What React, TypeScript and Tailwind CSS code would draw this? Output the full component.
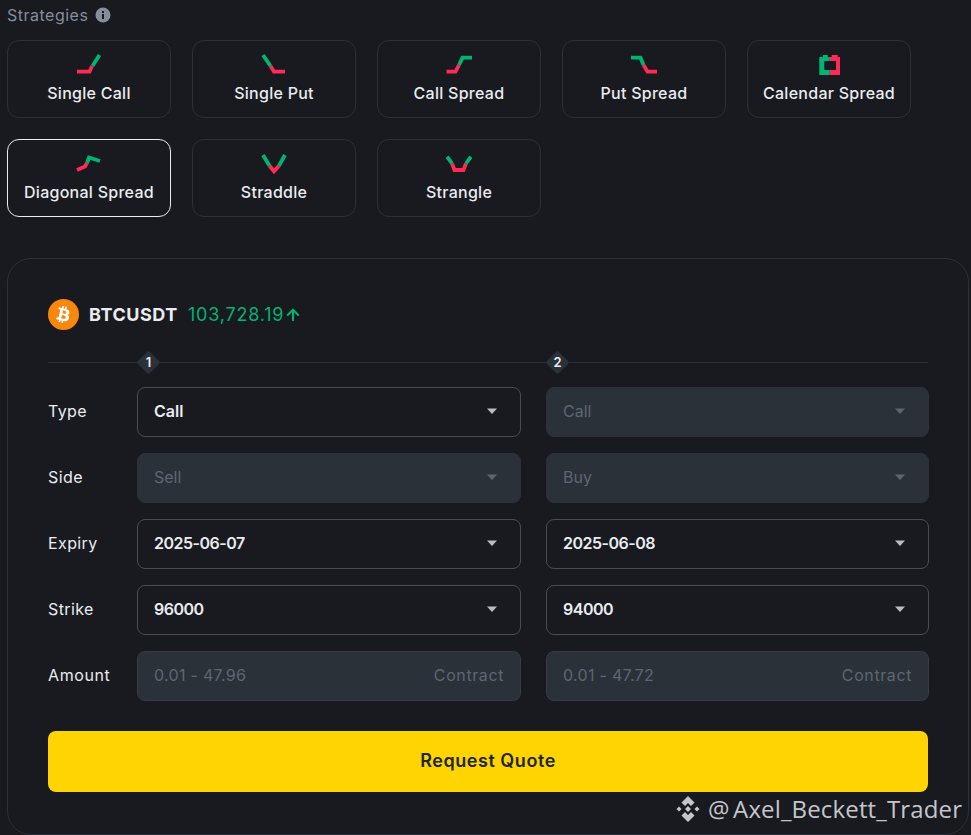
import { ArrowUp } from "lucide-react";
import { FaBtc } from "react-icons/fa";

const RED = "#FF2A55";
const GREEN = "#00B574";

const strategies = [
  { name: "Single Call", red: "M1 19.7H13.5L16 14", green: "M16.5 14L23.5 3" },
  { name: "Single Put", red: "M9.5 14L13 19.7H24", green: "M2 3L9.5 14" },
  { name: "Call Spread", red: "M0.5 19.7H9.5L13 13", green: "M13 13L16.5 5.7H26" },
  { name: "Put Spread", red: "M12.5 13L16.5 19.7H26", green: "M0 5.7H9.5L12.5 13" },
  {
    name: "Calendar Spread",
    red: "M13.7 5H15.7V3H21.7V5H24V23H13.7V18H20V9H13.7Z",
    green: "M3.3 5H7V3H11.7V5H13.7V9H8.3V18H13.7V23H3.3Z",
    solid: true,
  },
  { name: "Diagonal Spread", red: "M1 19L9 15.5L11 12", green: "M11 12L13 6.5L24 10" },
  { name: "Straddle", red: "M8.5 14.7L13 20.3L18 14.7", green: "M2 4L8.5 14.7M18 14.7L24 4" },
  { name: "Strangle", red: "M6 12.3L8.5 19H17.5L20 12.3", green: "M1 5.7L6 12.3M20 12.3L25 5.7" },
];

const rows = [
  { label: "Type", a: "Call", b: "Call", aOff: false, bOff: true },
  { label: "Side", a: "Sell", b: "Buy", aOff: true, bOff: true },
  { label: "Expiry", a: "2025-06-07", b: "2025-06-08", aOff: false, bOff: false },
  { label: "Strike", a: "96000", b: "94000", aOff: false, bOff: false },
];

const Select = ({ value, off }: { value: string; off: boolean }) => (
  <div
    className={`h-[50px] rounded-lg border flex items-center justify-between pl-4 pr-[22px] pb-[2px] text-[16px] ${
      off
        ? "bg-[#2B3139] border-[#2B3139] text-[#5E6673]"
        : "border-[#474D57] text-[#EAECEF] font-semibold"
    }`}
  >
    <span className={/^\d/.test(value) ? "tracking-[-0.5px]" : ""}>{value}</span>
    <svg width="12" height="8" viewBox="0 0 12 8">
      <path d="M1 1.5H11L6 7Z" fill={off ? "#5E6673" : "#B7BDC6"} />
    </svg>
  </div>
);

const AmountInput = ({ range }: { range: string }) => (
  <div className="h-[50px] rounded-lg border border-[#363C45] bg-[#2B3139] flex items-center justify-between px-4 pb-[2px] text-[16px] text-[#5E6673]">
    <span className="tracking-[0.3px]">{range}</span>
    <span className="tracking-[0.6px]">Contract</span>
  </div>
);

const Step = ({ n, className }: { n: number; className: string }) => (
  <div className={`absolute top-[-11px] w-[23px] h-[23px] flex items-center justify-center ${className}`}>
    <div className="absolute w-[17px] h-[17px] rotate-45 rounded-[2px] bg-[#2B3139]" />
    <span className="relative text-[13px] font-semibold text-[#EAECEF]">{n}</span>
  </div>
);

export default function App() {
  return (
    <div
      className="relative w-[971px] h-[835px] overflow-hidden bg-[#181A20] pl-[7px] pr-[2px]"
      style={{ fontFamily: "Inter, 'Liberation Sans', sans-serif" }}
    >
      <div className="flex items-center gap-[7px] h-[30px] text-[16px] tracking-[0.5px] text-[#848E9C]">
        Strategies
        <svg width="16" height="16" viewBox="0 0 16 16">
          <circle cx="8" cy="8" r="7.5" fill="#848E9C" />
          <path d="M7 7H9V12H7ZM7 4H9V6H7Z" fill="#181A20" />
        </svg>
      </div>

      <div className="mt-[10px] grid grid-cols-[repeat(5,164px)] gap-[21px]">
        {strategies.map((s) => (
          <div
            key={s.name}
            className={`h-[78px] rounded-xl border flex flex-col items-center pt-[11px] ${
              s.name === "Diagonal Spread" ? "border-[#EAECEF]" : "border-[#2B3139]"
            }`}
          >
            {s.solid ? (
              <svg width="26" height="24" viewBox="0 0 26 24">
                <path d={s.red} fill={RED} />
                <path d={s.green} fill={GREEN} />
              </svg>
            ) : (
              <svg width="26" height="24" viewBox="0 0 26 24" fill="none" strokeWidth="3.8">
                <path d={s.red} stroke={RED} />
                <path d={s.green} stroke={GREEN} />
              </svg>
            )}
            <span className="mt-[6px] text-[16px] leading-[22px] tracking-[0.27px] font-medium text-[#EAECEF]">
              {s.name}
            </span>
          </div>
        ))}
      </div>

      <div className="mt-[41px] h-[577px] rounded-3xl border border-[#2B3139] pl-[40px] pr-[40px] pt-[40px]">
        <div className="flex items-center h-[31px]">
          <div className="w-[31px] h-[31px] rounded-full bg-[#F7880D] flex items-center justify-center">
            <FaBtc size={17} color="#fff" className="rotate-[14deg]" />
          </div>
          <span className="ml-[10px] pb-[1px] text-[18px] tracking-[0.55px] font-bold text-[#EAECEF]">BTCUSDT</span>
          <span className="ml-[10px] pb-[1px] text-[18px] tracking-[0.8px] text-[#04B173]">103,728.19</span>
          <ArrowUp size={18} color="#04B173" strokeWidth={2.8} />
        </div>

        <div className="relative mt-[32px] h-px bg-[#2B3139]">
          <Step n={1} className="left-[89px]" />
          <Step n={2} className="left-[498px]" />
        </div>

        <div className="mt-[24px] grid grid-cols-[64px_384px_383px] gap-x-[25px] gap-y-4 items-center">
          {rows.map((r) => (
            <div key={r.label} className="contents">
              <span className="pb-[2px] text-[16px] tracking-[0.4px] text-[#EAECEF]">{r.label}</span>
              <Select value={r.a} off={r.aOff} />
              <Select value={r.b} off={r.bOff} />
            </div>
          ))}
          <span className="pb-[2px] text-[16px] tracking-[0.6px] text-[#EAECEF]">Amount</span>
          <AmountInput range="0.01 - 47.96" />
          <AmountInput range="0.01 - 47.72" />
        </div>

        <div className="mt-[30px] h-[61px] rounded-lg bg-[#FFD400] flex items-center justify-center pb-[3px] text-[18px] tracking-[0.55px] font-semibold text-[#202630]">
          Request Quote
        </div>
      </div>

      <div
        className="absolute left-[674px] top-[795px] flex items-center gap-[6px] text-[24px] leading-[28px] tracking-[0.15px] [word-spacing:-3px] text-[#C4C6CA]"
        style={{ fontFamily: "'Open Sans', sans-serif" }}
      >
        <svg width="28" height="28" viewBox="0 0 28 28" fill="#C4C6CA">
          <path d="M14 1L20.5 7.5L17 11L14 8L11 11L7.5 7.5ZM5 11.5L7.5 14L5 16.5L2.5 14ZM23 11.5L25.5 14L23 16.5L20.5 14ZM14 11L17 14L14 17L11 14ZM7.5 20.5L11 17L14 20L17 17L20.5 20.5L14 27Z" />
        </svg>
        <span>@ Axel_Beckett_Trader</span>
      </div>
    </div>
  );
}
